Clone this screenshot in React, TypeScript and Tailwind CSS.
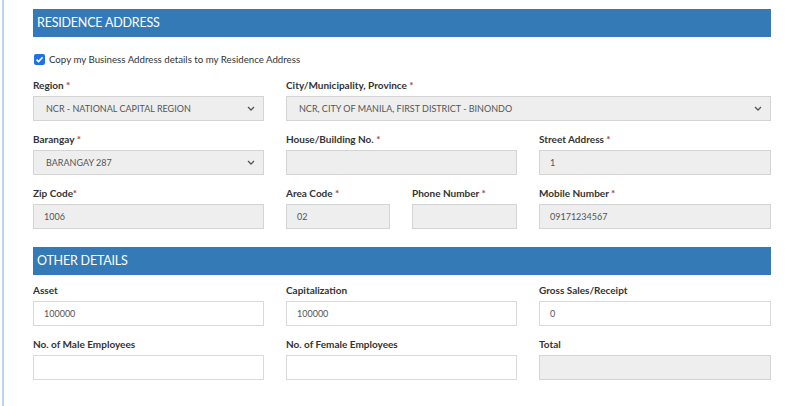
import React from "react";

const Req = () => <span className="text-[#a94442]"> *</span>;

function Label({ text, req, tight }: { text: string; req?: boolean; tight?: boolean }) {
  return (
    <div className="h-[12px] text-[10px] font-bold text-[#333] leading-[12px] whitespace-nowrap">
      {text}
      {req && (tight ? <span className="text-[#a94442]">*</span> : <Req />)}
    </div>
  );
}

function Chevron() {
  return (
    <svg width="8" height="5" viewBox="0 0 8 5" className="shrink-0">
      <path d="M1 1 L4 4 L7 1" fill="none" stroke="#555" strokeWidth="1.3" />
    </svg>
  );
}

function Select({ value }: { value: string }) {
  return (
    <div className="mt-[5px] h-[25px] bg-[#eeeeee] border border-[#d4d4d4] flex items-center pl-[12px] pr-[8px] text-[9px] text-[#555]">
      <span className="flex-1 whitespace-nowrap">{value}</span>
      <Chevron />
    </div>
  );
}

function Input({ value, disabled }: { value?: string; disabled?: boolean }) {
  return (
    <div
      className={
        "mt-[5px] h-[25px] border flex items-center pl-[10px] text-[9px] text-[#555] " +
        (disabled ? "bg-[#eeeeee] border-[#d4d4d4]" : "bg-white border-[#d9d9d9]")
      }
    >
      {value}
    </div>
  );
}

function Header({ text }: { text: string }) {
  return (
    <div className="h-[28px] bg-[#337ab7] flex items-center pl-[4px] text-white text-[12.5px] tracking-[-0.2px]">
      {text}
    </div>
  );
}

export default function App() {
  return (
    <div
      className="w-[800px] h-[406px] bg-white overflow-hidden"
      style={{ fontFamily: "Lato, 'Liberation Sans', sans-serif" }}
    >
      <div className="ml-[2px] h-full border-l-2 border-[#bcd5ee] pl-[29px] pr-[29px] pt-[9px]">
        <Header text="RESIDENCE ADDRESS" />
        <div className="mt-[16px] flex items-center h-[12px]">
          <div className="ml-[1px] w-[11px] h-[11px] rounded-[2px] bg-[#1a73e8] flex items-center justify-center">
            <svg width="9" height="9" viewBox="0 0 9 9">
              <path d="M1.5 4.6 L3.6 6.6 L7.6 2.2" fill="none" stroke="white" strokeWidth="1.6" />
            </svg>
          </div>
          <span className="ml-[4px] text-[9.7px] text-[#333]">
            Copy my Business Address details to my Residence Address
          </span>
        </div>
        <div className="grid grid-cols-[231px_231px_232px] gap-x-[22px] mt-[14px]">
          <div>
            <Label text="Region" req />
            <Select value="NCR - NATIONAL CAPITAL REGION" />
          </div>
          <div className="col-span-2">
            <Label text="City/Municipality, Province" req />
            <Select value="NCR, CITY OF MANILA, FIRST DISTRICT - BINONDO" />
          </div>
        </div>
        <div className="grid grid-cols-[231px_231px_232px] gap-x-[22px] mt-[12px]">
          <div>
            <Label text="Barangay" req />
            <Select value="BARANGAY 287" />
          </div>
          <div>
            <Label text="House/Building No." req />
            <Input disabled />
          </div>
          <div>
            <Label text="Street Address" req />
            <Input disabled value="1" />
          </div>
        </div>
        <div className="grid grid-cols-[231px_231px_232px] gap-x-[22px] mt-[12px]">
          <div>
            <Label text="Zip Code" req tight />
            <Input disabled value="1006" />
          </div>
          <div className="grid grid-cols-[104px_105px] gap-x-[22px]">
            <div>
              <Label text="Area Code" req />
              <Input disabled value="02" />
            </div>
            <div>
              <Label text="Phone Number" req />
              <Input disabled />
            </div>
          </div>
          <div>
            <Label text="Mobile Number" req />
            <Input disabled value="09171234567" />
          </div>
        </div>
        <div className="mt-[18px]">
          <Header text="OTHER DETAILS" />
        </div>
        <div className="grid grid-cols-[231px_231px_232px] gap-x-[22px] mt-[9px]">
          <div>
            <Label text="Asset" />
            <Input value="100000" />
          </div>
          <div>
            <Label text="Capitalization" />
            <Input value="100000" />
          </div>
          <div>
            <Label text="Gross Sales/Receipt" />
            <Input value="0" />
          </div>
        </div>
        <div className="grid grid-cols-[231px_231px_232px] gap-x-[22px] mt-[12px]">
          <div>
            <Label text="No. of Male Employees" />
            <Input />
          </div>
          <div>
            <Label text="No. of Female Employees" />
            <Input />
          </div>
          <div>
            <Label text="Total" />
            <Input disabled />
          </div>
        </div>
      </div>
    </div>
  );
}
